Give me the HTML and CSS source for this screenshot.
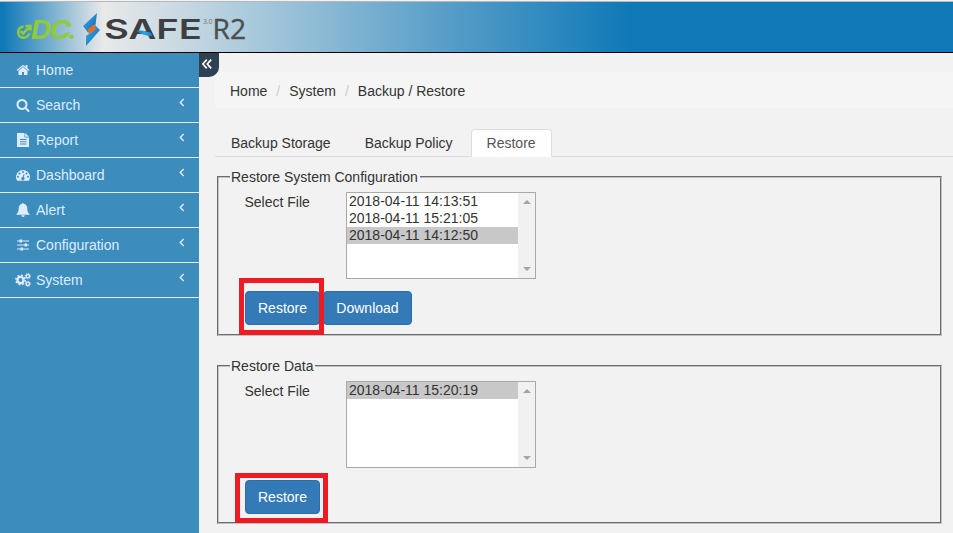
FILE: index.html
```html
<!DOCTYPE html>
<html lang="en">
<head>
<meta charset="utf-8">
<title>eDC SAFE R2 - Backup / Restore</title>
<link rel="stylesheet" href="styles.css">
</head>
<body>
<header class="topbar">
  <svg class="logo" width="260" height="50" viewBox="0 2 260 50" role="img" aria-label="eDC SAFE 3.0 R2">
    <defs>
      <linearGradient id="bolt" x1="0" y1="0" x2="1" y2="1">
        <stop offset="0" stop-color="#35b5ee"/><stop offset="1" stop-color="#1261ad"/>
      </linearGradient>
      <linearGradient id="swoosh" x1="0" x2="1">
        <stop offset="0" stop-color="#1669b0"/><stop offset=".5" stop-color="#28a9e5"/><stop offset="1" stop-color="#187fc4"/>
      </linearGradient>
    </defs>
    <path d="M23.500 26.700A5.500 5.500 0 1 0 29 33.500M20.500 31l2.500 2.500L30 26.500M25.500 26h5v4.500" class="mark-e"/>
    <text y="39" class="mark-dc"><tspan x="31" textLength="20" lengthAdjust="spacingAndGlyphs">D</tspan><tspan x="49.500" textLength="22" lengthAdjust="spacingAndGlyphs">C</tspan><tspan x="68">.</tspan></text>
    <path d="M97 13l-1.500 12-7.500 7.500-5-6.500z" fill="url(#bolt)"/>
    <path d="M94 24l6 6-14 16v-10l8-6z" fill="url(#bolt)"/>
    <path d="M87.500 29.500l7-5.500 1.500 5-7 5z" fill="#ee6825"/>
    <text x="104" y="39" class="mark-safe" textLength="98" lengthAdjust="spacingAndGlyphs">SAFE</text>
    <path d="M136 31c6-1.500 10 .5 14.500 1.500l2 3.500c-6-.2-12-1.500-16.500-5z" fill="url(#swoosh)"/>
    <text x="203" y="24" class="mark-version" textLength="9.500">3.0</text>
    <text x="212.500" y="39" class="mark-r2" textLength="33.500" lengthAdjust="spacingAndGlyphs">R2</text>
  </svg>
</header>
<div class="layout">
  <nav class="sidebar">
    <a class="item"><svg class="icon" viewBox="0 0 1792 1792"><path d="M1472 992v480q0 26-19 45t-45 19h-384v-384h-256v384h-384q-26 0-45-19t-19-45v-480q0-1 .5-3t.5-3l575-474 575 474q1 2 1 6zm223-69l-62 74q-8 9-21 11h-3q-13 0-21-7l-692-577-692 577q-12 8-24 7-13-2-21-11l-62-74q-8-10-7-23.500t11-21.500l719-599q32-26 76-26t76 26l244 204v-195q0-14 9-23t23-9h192q14 0 23 9t9 23v408l219 182q10 8 11 21.500t-7 23.500z"/></svg><span>Home</span></a>
    <a class="item"><svg class="icon" viewBox="0 0 1792 1792"><path d="M1216 832q0-185-131.500-316.500t-316.500-131.500-316.500 131.500-131.500 316.500 131.500 316.500 316.500 131.500 316.500-131.500 131.500-316.500zm512 832q0 52-38 90t-90 38q-54 0-90-38l-343-342q-179 124-399 124-143 0-273.500-55.500t-225-150-150-225-55.500-273.500 55.500-273.500 150-225 225-150 273.500-55.500 273.500 55.500 225 150 150 225 55.500 273.500q0 220-124 399l343 343q37 37 37 90z"/></svg><span>Search</span><svg class="caret" viewBox="0 0 6 9"><path d="M4.700 1L1.300 4.500 4.700 8"/></svg></a>
    <a class="item"><svg class="icon" viewBox="0 0 14 14"><path fill-rule="evenodd" d="M1 0h7.500v4.500H13V14H1zM9.200 0L13 3.800H9.200zM4 6v1h6.500V6zM4 8.300v1h6.500v-1zM4 10.600v1h6.500v-1z"/></svg><span>Report</span><svg class="caret" viewBox="0 0 6 9"><path d="M4.700 1L1.300 4.500 4.700 8"/></svg></a>
    <a class="item"><svg class="icon" viewBox="0 0 14 14"><path fill-rule="evenodd" d="M1.200 12.800A7 7 0 1 1 12.800 12.800zM2 7.800a1 1 0 1 0 0 2 1 1 0 0 0 0-2zM3.500 4.400a1 1 0 1 0 0 2 1 1 0 0 0 0-2zM7 2.900a1 1 0 1 0 0 2 1 1 0 0 0 0-2zM10.500 4.400a1 1 0 1 0 0 2 1 1 0 0 0 0-2zM12 7.800a1 1 0 1 0 0 2 1 1 0 0 0 0-2zM7.700 6L6.700 9a1.600 1.600 0 1 0 1 .2L8.600 6.200z"/></svg><span>Dashboard</span><svg class="caret" viewBox="0 0 6 9"><path d="M4.700 1L1.300 4.500 4.700 8"/></svg></a>
    <a class="item"><svg class="icon" viewBox="0 0 14 14"><path d="M6.200 .8a.8.8 0 0 1 1.600 0C10.200 1.300 11.300 3.200 11.300 5.500c0 3 .8 4.300 2.200 5.500v.8H.5V11C1.900 9.800 2.700 8.500 2.700 5.500 2.700 3.200 3.800 1.300 6.200 .8zM5.300 12.200h3.400a1.700 1.700 0 0 1-3.400 0z"/></svg><span>Alert</span><svg class="caret" viewBox="0 0 6 9"><path d="M4.700 1L1.300 4.500 4.700 8"/></svg></a>
    <a class="item"><svg class="icon" viewBox="0 0 14 14"><path d="M1 2.500h12v1H1zM1 6.500h12v1H1zM1 10.500h12v1H1zM3.500 1.500h2.500v3H3.500zM8.500 5.500h2.500v3H8.500zM4.500 9.500h2.500v3H4.500z"/></svg><span>Configuration</span><svg class="caret" viewBox="0 0 6 9"><path d="M4.700 1L1.300 4.500 4.700 8"/></svg></a>
    <a class="item"><svg class="icon gears" viewBox="0 0 16 14"><circle cx="5.500" cy="7" r="3.100" class="ring"/><circle cx="5.500" cy="7" r="4.700" class="teeth"/><circle cx="12.800" cy="3.200" r="1.700" class="ring small"/><circle cx="12.800" cy="3.200" r="2.600" class="teeth small"/><circle cx="12.800" cy="10.800" r="1.700" class="ring small"/><circle cx="12.800" cy="10.800" r="2.600" class="teeth small"/></svg><span>System</span><svg class="caret" viewBox="0 0 6 9"><path d="M4.700 1L1.300 4.500 4.700 8"/></svg></a>
  </nav>
  <button class="collapse" aria-label="Collapse menu"><svg width="10" height="10" viewBox="0 0 10 10"><path d="M4.800.6L.9 5l3.900 4.400M9.200.6L5.300 5l3.900 4.400"/></svg></button>
  <main class="content">
    <ol class="breadcrumb"><li>Home</li><li>System</li><li>Backup / Restore</li></ol>
    <ul class="tabs"><li>Backup Storage</li><li>Backup Policy</li><li class="active">Restore</li></ul>
    <fieldset class="group">
      <legend>Restore System Configuration</legend>
      <div class="row">
        <span class="label">Select File</span>
        <div class="listbox">
          <ul><li>2018-04-11 14:13:51</li><li>2018-04-11 15:21:05</li><li class="selected">2018-04-11 14:12:50</li></ul>
          <div class="scroll"><i class="up"></i><i class="down"></i></div>
        </div>
      </div>
      <div class="actions"><span class="marked"><button class="btn">Restore</button><i class="frame"></i></span><button class="btn download">Download</button></div>
    </fieldset>
    <fieldset class="group data">
      <legend>Restore Data</legend>
      <div class="row">
        <span class="label">Select File</span>
        <div class="listbox">
          <ul><li class="selected">2018-04-11 15:20:19</li></ul>
          <div class="scroll"><i class="up"></i><i class="down"></i></div>
        </div>
      </div>
      <div class="actions"><span class="marked"><button class="btn">Restore</button><i class="frame"></i></span></div>
    </fieldset>
  </main>
</div>
</body>
</html>
```
FILE: styles.css
```css
* { box-sizing: border-box; }
body {
  margin: 0;
  height: 533px;
  overflow: hidden;
  display: flex;
  flex-direction: column;
  background: #f2f2f2;
  color: #333;
  font: 14px/20px "Liberation Sans", Arial, sans-serif;
}
ul, ol { list-style: none; margin: 0; padding: 0; }
button { font: inherit; border: 0; padding: 0; }

.topbar {
  flex: none;
  height: 53px;
  border-top: 1px solid #f2f2f2;
  border-bottom: 1px solid #000;
  background: linear-gradient(#b4b9bb, #b4b9bb) 0 0 / 100% 1px no-repeat,
    linear-gradient(90deg, #0f79b7 0, #0f79b7 3px, #e9e9e9 103px, #aacadc 250px, #5a9fc9 440px, #0f79b7 630px);
}
.logo { display: block; margin-top: 1px; }
.mark-e { fill: none; stroke: #8fca3c; stroke-width: 2.6; }
.mark-dc { font: italic 700 26px Inter, sans-serif; fill: #8fca3c; }
.mark-safe { font: 600 27px Inter, sans-serif; fill: #3e3f42; }
.mark-version { font: 7px "Open Sans", sans-serif; fill: #777; }
.mark-r2 { font: 27px "Open Sans", sans-serif; fill: #4c4f52; stroke: #4c4f52; stroke-width: .4; }

.layout { flex: 1; display: flex; align-items: flex-start; min-height: 0; }
.sidebar { flex: none; width: 199px; height: 100%; background: #3c8dbc; }
.item {
  display: flex;
  align-items: center;
  height: 35px;
  padding: 0 14px 0 16px;
  border-bottom: 1px solid #e4edf3;
  color: #dfebff;
}
.icon { width: 14px; height: 14px; margin-right: 6px; fill: #dfebff; }
.gears { width: 16px; margin: 0 5px 0 -1px; }
.ring { fill: none; stroke: #dfebff; stroke-width: 2.4; }
.teeth { fill: none; stroke: #dfebff; stroke-width: 1.5; stroke-dasharray: 1.85 1.84; }
.ring.small { stroke-width: 1.4; }
.teeth.small { stroke-width: .9; stroke-dasharray: 1.1 .94; }
.caret { width: 6px; height: 9px; margin: -5px 0 0 auto; fill: none; stroke: #dfebff; stroke-width: 1.4; }
.collapse {
  flex: none;
  z-index: 1;
  display: flex;
  justify-content: center;
  align-items: center;
  width: 20px;
  height: 24px;
  padding: 0 4px 3px 0;
  border-radius: 0 0 10px 0;
  background: #2f4050;
}
.collapse svg { fill: none; stroke: #fff; stroke-width: 1.7; }

.content { flex: 1; margin-left: -4px; padding-top: 19px; }
.breadcrumb { display: flex; height: 36px; padding: 9px 15px 7px; background: #f5f5f5; }
.breadcrumb li + li::before { content: "/"; padding: 0 9px; color: #ccc; }
.tabs { display: flex; gap: 2px; height: 28px; margin-top: 21px; border-bottom: 1px solid #ddd; }
.tabs li { height: 28px; padding: 3px 15px 0; border: 1px solid transparent; }
.tabs .active {
  background: #fff;
  border-color: #ddd #ddd #fff;
  border-radius: 4px 4px 0 0;
  color: #555;
}
.group {
  height: 169px;
  margin: 10px 11px 0 2px;
  padding: 5px 10px 0 11px;
  border: 2px groove #c0c0c0;
}
.group.data { height: 168px; margin-top: 20px; }
legend { padding: 0 2px 0 1px; }
.row { display: flex; padding-left: 14.5px; }
.label { width: 101.5px; }
.listbox { display: flex; width: 190px; height: 87px; border: 1px solid #a9a9a9; background: #fff; }
.listbox ul { flex: 1; }
.listbox li { height: 17px; padding-left: 2px; line-height: 17px; }
.listbox .selected { background: #c8c8c8; }
.scroll {
  width: 17px;
  display: flex;
  flex-direction: column;
  justify-content: space-between;
  align-items: center;
  padding: 7px 0;
  background: #f1f1f1;
}
.scroll i { border: 4px solid transparent; }
.scroll .up { border-top: 0; border-bottom-color: #a3a3a3; }
.scroll .down { border-bottom: 0; border-top-color: #a3a3a3; }
.actions { display: flex; gap: 3px; margin: 12px 0 0 15px; }
.marked { position: relative; display: flex; }
.btn {
  width: 75px;
  height: 34px;
  border: 1px solid #2e6da4;
  border-radius: 4px;
  background: #337ab7;
  color: #fff;
}
.download { width: 89px; }
.frame { position: absolute; inset: -13px -4px -10px -6px; border: 5px solid #ed1c24; z-index: 1; }
.data .frame { inset: -7px -8px -9px -10px; }
```
